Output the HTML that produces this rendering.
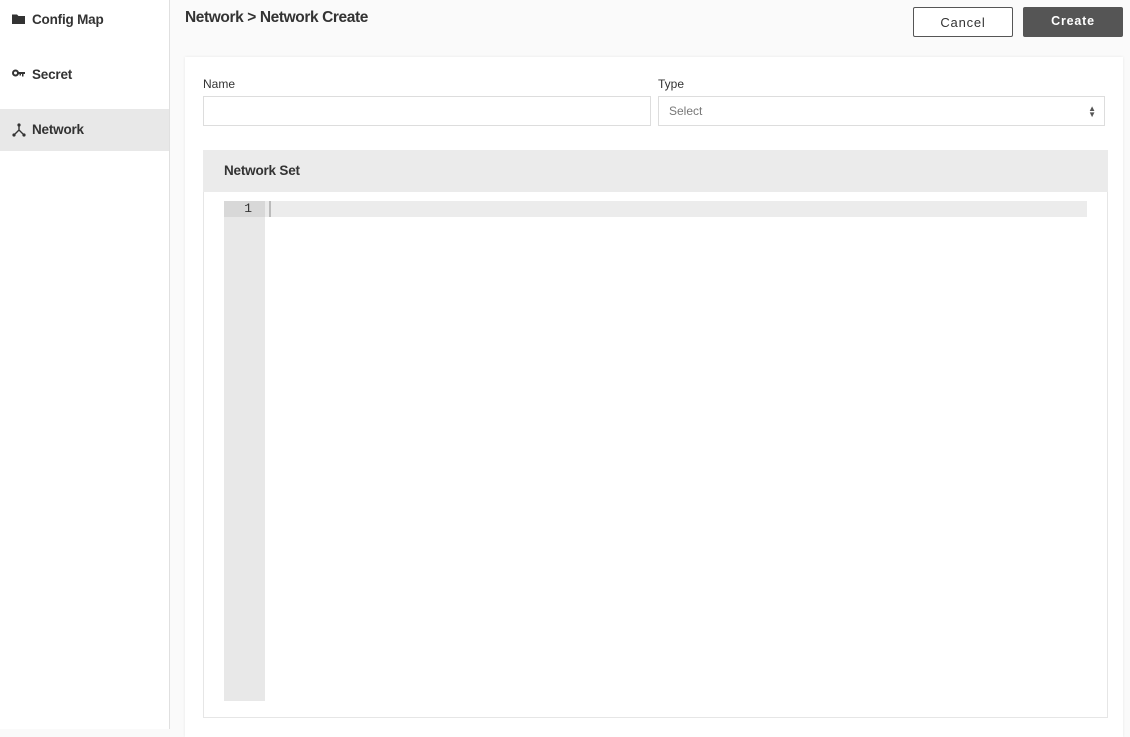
<!DOCTYPE html>
<html><head><style>
*{box-sizing:border-box;margin:0;padding:0}
body{width:1130px;height:729px;background:#fafafa;font-family:"Liberation Sans",sans-serif;color:#333;position:relative;overflow:hidden}
.side{position:absolute;left:0;top:0;width:170px;height:729px;background:#fff;border-right:1px solid #e0e0e0}
.item{position:absolute;left:0;width:169px;height:42px;font-size:13.5px;font-weight:bold;color:#333;padding-left:32px;line-height:42px;letter-spacing:-0.2px}
.item svg{position:absolute;left:12px;top:14px}
.title{position:absolute;left:185px;top:9px;font-size:15.5px;font-weight:bold;color:#333;letter-spacing:-0.4px}
.btn{position:absolute;top:7px;height:30px;width:100px;font-size:13px;letter-spacing:0.8px;text-align:center;line-height:29px;border-radius:2px}
.card{position:absolute;left:185px;top:57px;width:938px;height:680px;background:#fff;box-shadow:0 0 3px rgba(0,0,0,.08)}
.lbl{position:absolute;top:77px;font-size:12px;color:#333}
.inp{position:absolute;top:96px;height:30px;border:1px solid #ddd;background:#fff;font-size:12px;color:#777;padding-left:10px;line-height:29px}
</style></head><body>
<div class="side">
 <div class="item" style="top:-1px"><svg width="14" height="12" viewBox="0 0 14 12"><path d="M0 1.5h5l1.5 1.5H13v8H0z" fill="#333"/></svg>Config Map</div>
 <div class="item" style="top:54px"><svg width="14" height="12" viewBox="0 0 14 12"><circle cx="3.5" cy="5" r="2.5" fill="none" stroke="#333" stroke-width="2"/><path d="M6 4h7v2h-1.5v2.5h-1.5V6H9v1.5H7.5V6H6z" fill="#333"/></svg>Secret</div>
 <div class="item" style="top:109px;background:#e8e8e8"><svg width="14" height="14" viewBox="0 0 14 14"><path d="M7 2v5M7 7L2.5 11.5M7 7l4.5 4.5" stroke="#333" stroke-width="1.4" fill="none"/><circle cx="7" cy="2" r="1.6" fill="#333"/><circle cx="2" cy="12" r="1.6" fill="#333"/><circle cx="12" cy="12" r="1.6" fill="#333"/></svg>Network</div>
</div>
<div class="title">Network &gt; Network Create</div>
<div class="btn" style="left:913px;width:100px;border:1px solid #555;background:#fff;color:#333">Cancel</div>
<div class="btn" style="left:1023px;width:100px;background:#555;color:#fff;font-weight:bold;font-size:12.5px">Create</div>
<div class="card"></div>
<div class="lbl" style="left:203px">Name</div>
<div class="lbl" style="left:658px">Type</div>
<div class="inp" style="left:203px;width:448px"></div>
<div class="inp" style="left:658px;width:447px">Select<span style="position:absolute;right:8px;top:0;font-size:8px;color:#555;line-height:6px;padding-top:9px">▲<br>▼</span></div>
<div style="position:absolute;left:203px;top:150px;width:905px;height:568px;border:1px solid #e6e6e6;background:#fff"></div>
<div style="position:absolute;left:203px;top:150px;width:905px;height:42px;background:#ebebeb;font-size:13.5px;font-weight:bold;padding-left:21px;line-height:42px;letter-spacing:-0.2px">Network Set</div>
<div style="position:absolute;left:224px;top:201px;width:41px;height:500px;background:#e8e8e8"></div>
<div style="position:absolute;left:224px;top:201px;width:41px;height:16px;background:#d8d8d8;font-family:'Liberation Mono',monospace;font-size:13px;text-align:right;padding-right:13px;line-height:16px">1</div>
<div style="position:absolute;left:265px;top:201px;width:822px;height:16px;background:#ececec"></div>
<div style="position:absolute;left:269px;top:201px;width:2px;height:16px;background:#bbb"></div>
</body></html>
